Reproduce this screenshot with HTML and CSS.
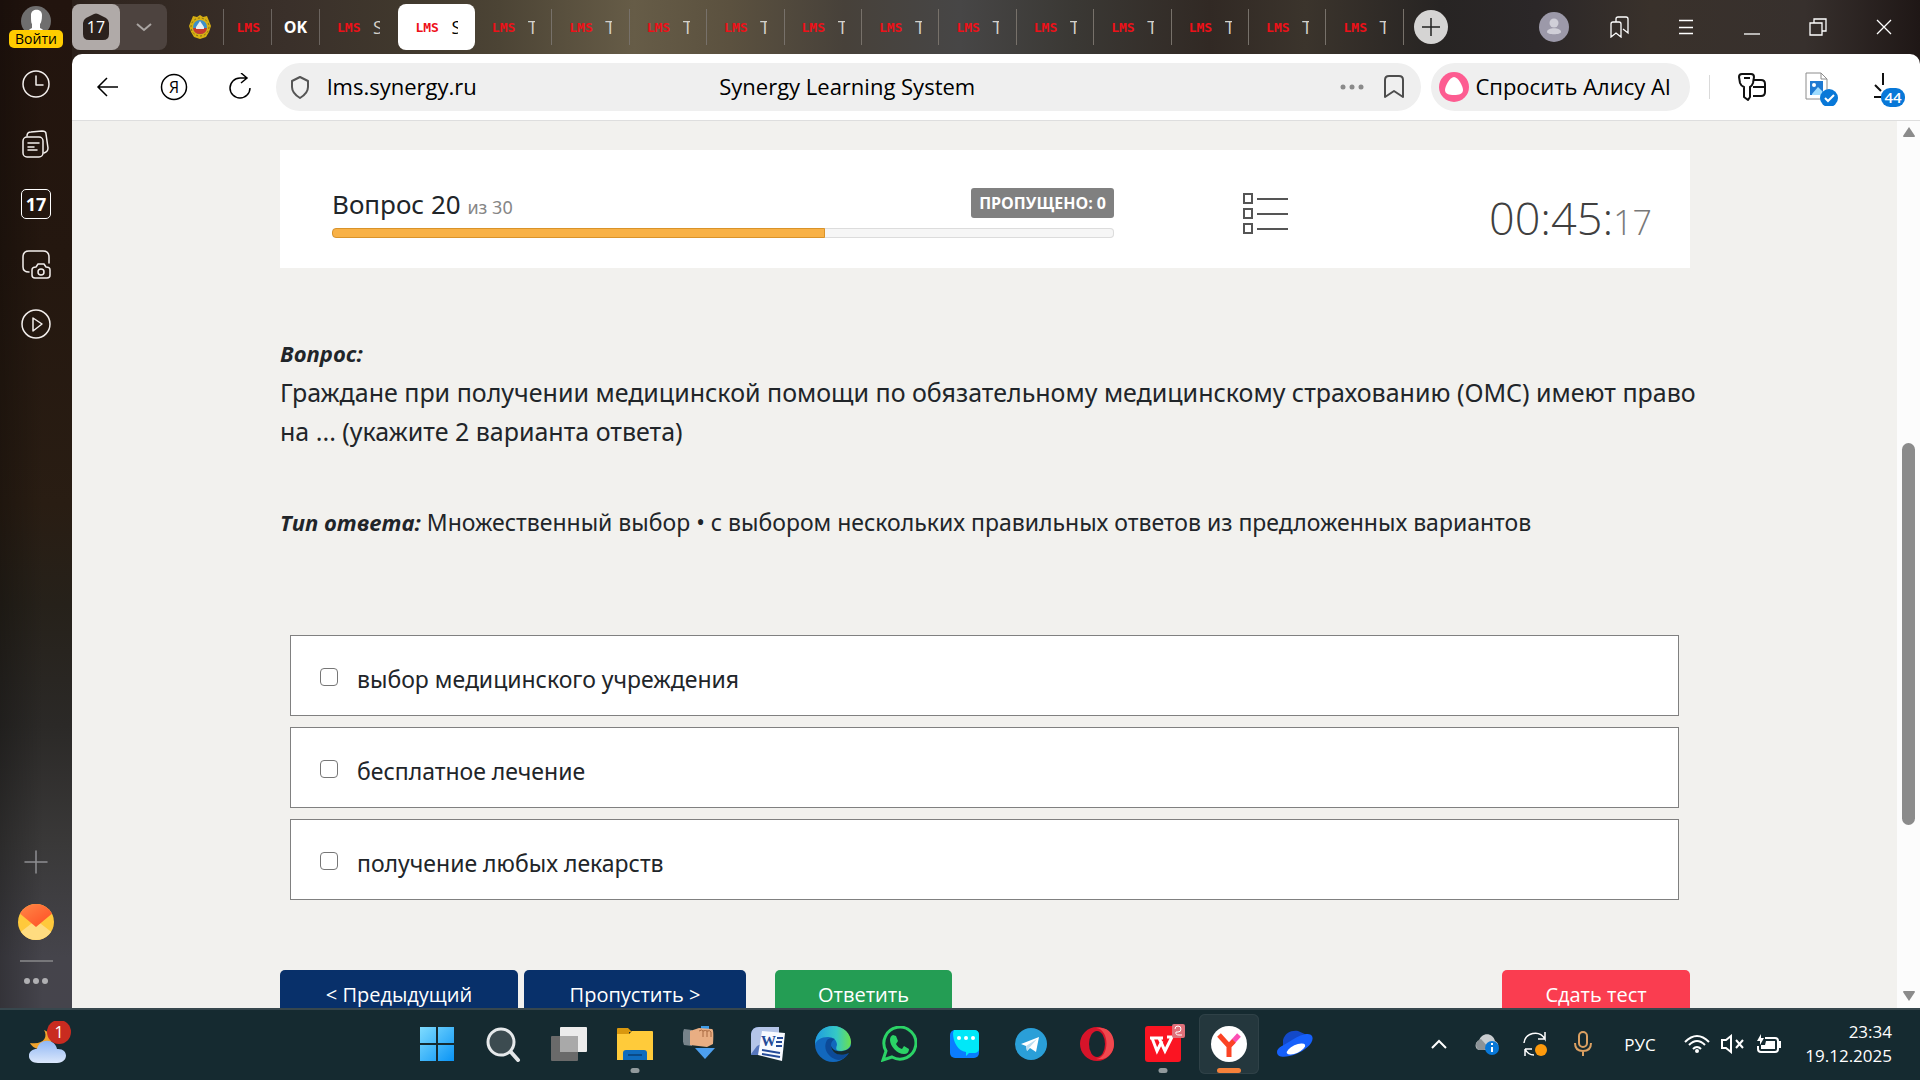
FILE: index.html
```html
<!DOCTYPE html>
<html lang="ru">
<head>
    <meta charset="UTF-8">
    <meta name="viewport" content="width=device-width, initial-scale=1.0">
    <title>Synergy Learning System</title>
    <link rel="stylesheet" href="styles.css">
</head>
<body>

    <div class="desktop">
        <aside class="sidebar">
            <button class="login">
                <svg class="login-face" width="30" height="30" viewBox="0 0 30 30"><circle cx="15" cy="15" r="15" fill="#6f6e6e"/><path d="M10 9c0-7 11-7 11 0 0 5-1 8-2 9v4c2 1 4 2 5 4H6c1-2 3-3 5-4v-4c-1-1-1-4-1-9z" fill="#fff"/></svg>
                <span class="login-label">Войти</span>
            </button>
            <nav class="side-nav">
                <button class="side-btn" aria-label="История"><svg width="32" height="32" viewBox="0 0 32 32"><circle cx="16" cy="16" r="13"/><path d="M16 8v9h7"/></svg></button>
                <button class="side-btn" aria-label="Коллекции"><svg width="32" height="32" viewBox="0 0 32 32"><rect x="3" y="9" width="20" height="20" rx="4"/><path d="M7 8c0-3 1-4 4-4l11-1c3 0 4 1 4 3l2 14c0 3-1 4-4 5M8 15h11M8 19h6M8 22h9"/></svg></button>
                <button class="side-btn" aria-label="Вкладки"><span class="side-count">17</span></button>
                <button class="side-btn" aria-label="Скриншот"><svg width="32" height="32" viewBox="0 0 32 32"><path d="M9 24c-4 0-6-1-6-5V9c0-4 2-6 6-6h14c4 0 6 2 6 6v6"/><path d="M12 22c0-2 1-3 4-3l2-3h6l2 3c3 0 4 1 4 3v5c0 2-1 3-3 3H15c-2 0-3-1-3-3z"/><circle cx="21" cy="24" r="3"/></svg></button>
                <button class="side-btn" aria-label="Видео"><svg width="32" height="32" viewBox="0 0 32 32"><circle cx="16" cy="16" r="14"/><path d="M13 10v13l9-7z"/></svg></button>
            </nav>
            <div class="side-bottom">
                <button class="side-btn" aria-label="Добавить"><svg class="dim" width="32" height="32" viewBox="0 0 32 32"><path d="M16 5v22M5 16h22"/></svg></button>
                <button class="side-btn" aria-label="Почта"><svg width="36" height="36" viewBox="0 0 36 36" stroke="none"><defs><clipPath id="mailClip"><circle cx="18" cy="18" r="18"/></clipPath><linearGradient id="mailRed" x1="0" y1="0" x2="1" y2="1"><stop offset="0" stop-color="#ff8a48"/><stop offset="1" stop-color="#ff4a22"/></linearGradient></defs><g clip-path="url(#mailClip)" stroke="none"><path d="M0 0h36v36H0z" fill="#ffc93c"/><path d="M0 30l18-14 18 14v6H0z" fill="#ffdc80"/><path d="M0 8l3-8h30l3 8-18 15z" fill="url(#mailRed)"/></g></svg></button>
                <hr class="side-line">
                <button class="side-more" aria-label="Ещё"><i></i><i></i><i></i></button>
            </div>
        </aside>

        <div class="browser">
            <header class="tab-strip">
                <div class="tab-group">
                    <button class="group-home" aria-label="17 вкладок"><svg width="28" height="28" viewBox="0 0 28 28"><path d="M12 1q2-1 4 0l8 4q3 2 3 5v11q0 6-6 6H7q-6 0-6-6V10q0-3 3-5z" fill="#2b211d"/><text x="14" y="20" text-anchor="middle" class="group-num">17</text></svg></button>
                    <button class="group-more" aria-label="Список вкладок"><svg width="18" height="10" viewBox="0 0 18 10"><path d="M2 2l7 6 7-6" fill="none" stroke="#aaa5a2" stroke-width="2"/></svg></button>
                </div>
                <div class="pinned">
                    <button class="pin" aria-label="ГИБДД"><svg width="24" height="26" viewBox="0 0 24 26"><path d="M12 1l3 2 4-1 2 5 2 5-2 6-3 5-6 2-6-2-3-5-2-6 2-5 2-5 4 1z" fill="#d8b012"/><circle cx="12" cy="13" r="9" fill="none" stroke="#7d6b13" stroke-width="1" stroke-dasharray="2 2"/><circle cx="12" cy="13" r="7" fill="#3d8fc9"/><path d="M5 14h14q-1 6-7 6t-7-6z" fill="#c73a2c"/><path d="M8 13l4-6 4 6v2H8z" fill="#e8eef2"/></svg></button>
                    <button class="pin"><span class="lms">LMS</span></button>
                    <button class="pin"><b class="ok">OK</b></button>
                </div>
                <div class="tabs">
                    <button class="tab tab-plain"><span class="lms">LMS</span><span class="tab-title">S</span></button>
                    <button class="tab tab-active"><span class="lms">LMS</span><span class="tab-title">S</span></button>
                    <button class="tab"><span class="lms">LMS</span><span class="tab-title">Т</span></button>
                    <button class="tab"><span class="lms">LMS</span><span class="tab-title">Т</span></button>
                    <button class="tab"><span class="lms">LMS</span><span class="tab-title">Т</span></button>
                    <button class="tab"><span class="lms">LMS</span><span class="tab-title">Т</span></button>
                    <button class="tab"><span class="lms">LMS</span><span class="tab-title">Т</span></button>
                    <button class="tab"><span class="lms">LMS</span><span class="tab-title">Т</span></button>
                    <button class="tab"><span class="lms">LMS</span><span class="tab-title">Т</span></button>
                    <button class="tab"><span class="lms">LMS</span><span class="tab-title">Т</span></button>
                    <button class="tab"><span class="lms">LMS</span><span class="tab-title">Т</span></button>
                    <button class="tab"><span class="lms">LMS</span><span class="tab-title">Т</span></button>
                    <button class="tab"><span class="lms">LMS</span><span class="tab-title">Т</span></button>
                    <button class="tab"><span class="lms">LMS</span><span class="tab-title">Т</span></button>
                </div>
                <button class="new-tab" aria-label="Новая вкладка"><svg width="34" height="34" viewBox="0 0 34 34"><circle cx="17" cy="17" r="17" fill="#d5d4d3"/><path d="M17 8v18M8 17h18" stroke="#222" stroke-width="1.5"/></svg></button>
                <div class="window-controls">
                    <button aria-label="Профиль"><svg width="30" height="30" viewBox="0 0 30 30"><circle cx="15" cy="15" r="15" fill="#9c99a9"/><circle cx="15" cy="11" r="4.5" fill="#d0cfd8"/><path d="M8 20c0-5 14-5 14 0 0 3-14 3-14 0z" fill="#d0cfd8"/></svg></button>
                    <button aria-label="Закладки"><svg class="line" width="22" height="22" viewBox="0 0 22 22"><path d="M2 8q0-2 2-2h6q2 0 2 2v13l-5-4-5 4zM7 6V3q0-2 2-2h8q2 0 2 2v14l-5-4"/></svg></button>
                    <button aria-label="Меню"><svg class="line" width="16" height="16" viewBox="0 0 16 16"><path d="M1 1.500h14M1 8.500h14M1 14.500h14"/></svg></button>
                    <button aria-label="Свернуть"><svg class="line" width="16" height="16" viewBox="0 0 16 16"><path d="M0 15h16"/></svg></button>
                    <button aria-label="Развернуть"><svg class="line" width="18" height="18" viewBox="0 0 18 18"><path d="M1 5h12v12H1zM5 5V1h12v12h-4"/></svg></button>
                    <button aria-label="Закрыть"><svg class="line" width="16" height="16" viewBox="0 0 16 16"><path d="M1 1l14 14M15 1L1 15"/></svg></button>
                </div>
            </header>

            <div class="toolbar">
                <div class="nav-buttons">
                    <button aria-label="Назад"><svg width="24" height="24" viewBox="0 0 24 24"><path d="M22 12H2M11 3l-9 9 9 9"/></svg></button>
                    <button aria-label="Яндекс"><svg width="28" height="28" viewBox="0 0 28 28"><circle cx="14" cy="14" r="12.500"/><text x="14" y="20" text-anchor="middle" class="ya">Я</text></svg></button>
                    <button aria-label="Обновить"><svg width="26" height="28" viewBox="0 0 26 28"><path d="M23 15a10 10 0 1 1-10-10h7M14 0l6 5-6 5"/></svg></button>
                </div>
                <form class="address">
                    <label class="address-left">
                        <svg width="22" height="24" viewBox="0 0 22 24"><path d="M11 2l8 4v6c0 4-3 8-8 11-5-3-8-7-8-11V6z" fill="none" stroke="#555" stroke-width="2" stroke-linejoin="round"/></svg>
                        <input class="url" type="text" value="lms.synergy.ru" aria-label="Адрес">
                    </label>
                    <span class="page-title">Synergy Learning System</span>
                    <span class="address-right">
                        <svg width="24" height="6" viewBox="0 0 24 6" fill="#8a8a8a"><circle cx="3" cy="3" r="2.500"/><circle cx="12" cy="3" r="2.500"/><circle cx="21" cy="3" r="2.500"/></svg>
                        <svg width="22" height="24" viewBox="0 0 22 24"><path d="M2 5q0-4 4-4h10q4 0 4 4v17l-9-6-9 6z" fill="none" stroke="#4d4d4d" stroke-width="2" stroke-linejoin="round"/></svg>
                    </span>
                </form>
                <button class="alisa">
                    <svg width="30" height="30" viewBox="0 0 30 30"><circle cx="15" cy="15" r="15" fill="#fd5c91"/><path d="M15 5c4 0 9 9 9 13s-4 5-9 5-9-1-9-5 5-13 9-13z" fill="#fff"/></svg>
                    <span>Спросить Алису AI</span>
                </button>
                <div class="extensions">
                    <button aria-label="Пароли"><svg width="28" height="28" viewBox="0 0 28 28" fill="none" stroke="#111" stroke-width="2" stroke-linejoin="round"><path d="M15 7h8q4 0 4 4v8q0 4-4 4h-8M15 14h12"/><path d="M4 1h9q3 0 3 3l-1 6q-1 3-3 4v10l-2 3-4-3V14q-3-1-4-4L1 4q0-3 3-3z" fill="#fff"/><path d="M6 5h6"/></svg></button>
                    <button aria-label="Файл"><svg width="42" height="34" viewBox="-8 0 42 34"><path d="M1 1h15l6 6v20H1z" fill="#fff" stroke="#8c8c8c"/><path d="M16 1v6h6" fill="none" stroke="#8c8c8c"/><path d="M5 9h13v14H5z" fill="#1f7ad2"/><path d="M7 22l6-7 5 5v3H7z" fill="#9fdcff"/><circle cx="9" cy="13" r="2" fill="#fff"/><circle cx="24" cy="26" r="9" fill="#0878d8"/><path d="M20 26l3 3 6-6" fill="none" stroke="#fff" stroke-width="2"/></svg></button>
                    <button aria-label="Загрузки"><svg width="42" height="36" viewBox="-10 -2 42 36"><path d="M10 0v12M2 12l6 6M1 24h8" fill="none" stroke="#111" stroke-width="2"/><rect x="8" y="15" width="24" height="19" rx="9" fill="#0878d8"/><text x="20" y="30" text-anchor="middle" class="dl-num">44</text></svg></button>
                </div>
            </div>

            <div class="viewport">
                <main class="page">
                    <section class="status">
                        <div class="progress-block">
                            <div class="progress-head">
                                <div class="counter">Вопрос 20 <small>из 30</small></div>
                                <span class="skipped">ПРОПУЩЕНО: 0</span>
                            </div>
                            <div class="progress"><div class="progress-bar" style="width: 63%"></div></div>
                        </div>
                        <button class="list-btn" aria-label="Список вопросов"><svg width="48" height="44" viewBox="0 0 48 44" fill="none" stroke="#555" stroke-width="2"><path d="M2 2h8v9H2zM2 17h8v9H2zM2 32h8v9H2zM15 7h31M15 22h31M15 37h31"/></svg></button>
                        <div class="timer">00:45:<span class="timer-sec">17</span></div>
                    </section>

                    <section class="question">
                        <p><strong>Вопрос:</strong><br>Граждане при получении медицинской помощи по обязательному медицинскому страхованию (ОМС) имеют право на ... (укажите 2 варианта ответа)</p>
                        <p class="answer-type"><strong>Тип ответа:</strong> Множественный выбор • с выбором нескольких правильных ответов из предложенных вариантов</p>
                    </section>

                    <section class="answers">
                        <label class="answer"><input type="checkbox"><span>выбор медицинского учреждения</span></label>
                        <label class="answer"><input type="checkbox"><span>бесплатное лечение</span></label>
                        <label class="answer"><input type="checkbox"><span>получение любых лекарств</span></label>
                    </section>

                    <div class="actions">
                        <button class="btn btn-prev">&lt; Предыдущий</button>
                        <button class="btn btn-skip">Пропустить &gt;</button>
                        <button class="btn btn-answer">Ответить</button>
                        <button class="btn btn-finish">Сдать тест</button>
                    </div>
                </main>
                <div class="scrollbar">
                    <svg width="14" height="12" viewBox="0 0 14 12"><path d="M7 1l6 9q0 1-1 1H2q-1 0-1-1z" fill="#8b8b8b"/></svg>
                    <div class="scroll-track"><div class="scroll-thumb"></div></div>
                    <svg width="14" height="12" viewBox="0 0 14 12"><path d="M7 11l6-9q0-1-1-1H2q-1 0-1 1z" fill="#8b8b8b"/></svg>
                </div>
            </div>
        </div>
    </div>

    <footer class="taskbar">
        <button class="weather" aria-label="Погода">
            <svg width="42" height="46" viewBox="0 0 42 46"><defs><linearGradient id="cloud" x1="0" y1="0" x2="0" y2="1"><stop offset="0" stop-color="#8fb7f4"/><stop offset="1" stop-color="#dbe7fb"/></linearGradient></defs><path d="M15 9c4 7 0 15-14 13 4 8 17 9 21 1 2-6-1-12-7-14z" fill="#f0a32c"/><path d="M9 42c-12 0-12-14-1-14 2-11 18-11 20 0 12-1 12 14 0 14z" fill="url(#cloud)"/><circle cx="30" cy="11" r="12" fill="#c92b20"/><text x="30" y="17" text-anchor="middle" class="badge-num">1</text></svg>
        </button>
        <nav class="apps">
            <button class="app" aria-label="Пуск"><svg width="36" height="36" viewBox="0 0 36 36"><defs><linearGradient id="win" x1="0" y1="0" x2="1" y2="1"><stop offset="0" stop-color="#7fdcff"/><stop offset="1" stop-color="#0a94f5"/></linearGradient></defs><path d="M1 1h16v16H1zM19 1h16v16H19zM1 19h16v16H1zM19 19h16v16H19z" fill="url(#win)"/></svg></button>
            <button class="app" aria-label="Поиск"><svg width="36" height="36" viewBox="0 0 36 36"><path d="M25 25l8 9" stroke="#e3e6e8" stroke-width="4" stroke-linecap="round"/><circle cx="16" cy="16" r="13" fill="#3c4b50" stroke="#e6e9eb" stroke-width="3"/></svg></button>
            <button class="app" aria-label="Представление задач"><svg width="36" height="36" viewBox="0 0 36 36"><rect x="9" y="1" width="27" height="25" rx="1" fill="#ececec"/><rect x="0" y="10" width="27" height="25" rx="1" fill="#6a6a6a"/><path d="M9 10h18v16H9z" fill="#a9a9a9"/></svg></button>
            <button class="app app-open" aria-label="Проводник"><svg width="36" height="36" viewBox="0 0 36 36"><path d="M0 3q0-1 1-1h10l4 4h-3v5H0z" fill="#d9980f"/><path d="M0 8h12l3-3h20q1 0 1 1v28H0z" fill="#ffcb3a"/><path d="M6 34v-7q0-3 3-3h18q3 0 3 3v7z" fill="#0f6cbd"/><path d="M11 29h14" stroke="#0a4a86" stroke-width="2"/></svg></button>
            <button class="app" aria-label="Загрузчик"><svg width="36" height="36" viewBox="0 0 36 36"><path d="M1 3l8 1v16l-8-1q-3-8 0-16z" fill="#77838a"/><path d="M18 0h8v6h-8z" fill="#3e9be6"/><path d="M7 5l9-3 13 1q2 0 1 15l-6 3-17-2z" fill="#e9ae83"/><path d="M16 5q3-2 4 0v6M20 5q3-1 4 0v6M24 5q3-1 4 1v5" fill="none" stroke="#a86840"/><path d="M12 22h20L22 33z" fill="#4d9fee"/></svg></button>
            <button class="app" aria-label="Word"><svg width="36" height="36" viewBox="0 0 36 36"><path d="M2 8q1-7 8-7h20v28H2z" fill="#5777bd"/><path d="M2 8q1-7 8-7h20v8L8 20l-6 8z" fill="#b4c5e8"/><path d="M13 5l23 2-3 28-24-6z" fill="#f8faff"/><path d="M28 12h6M27 16h6M27 20h6M13 24l18 3M13 28l18 3" stroke="#244a98" stroke-width="2"/><text x="12" y="20" class="word-w">W</text></svg></button>
            <button class="app" aria-label="Edge"><svg width="36" height="36" viewBox="0 0 36 36"><defs><linearGradient id="edgeTop" x1="0" y1="0" x2="1" y2="0"><stop offset="0" stop-color="#1f9be0"/><stop offset=".6" stop-color="#35c9c6"/><stop offset="1" stop-color="#6be04d"/></linearGradient></defs><circle cx="18" cy="18" r="18" fill="#1268bd"/><path d="M0 19C0 7 8 0 18 0c11 0 18 8 18 16 0 6-5 9-10 9-6 0-5-3-4-6 0-5-4-8-9-8C6 11 1 14 0 19z" fill="url(#edgeTop)"/><path d="M12 14c-5 9 2 19 12 20 5-1 8-4 10-7-10 4-18 1-18-8 0-3 2-5 4-6-3-1-6-1-8 1z" fill="#0c4a98"/><path d="M36 20v6l-2 1c-9 4-17 1-18-7 2 5 8 6 12 5q6-1 8-5z" fill="#152a30"/></svg></button>
            <button class="app" aria-label="WhatsApp"><svg width="36" height="36" viewBox="0 0 36 36"><path d="M2 34l3-9a16 16 0 1 1 6 6z" fill="none" stroke="#2bd366" stroke-width="3"/><path d="M12 9l3 1 2 5-2 3q2 4 6 5l2-3 5 3q0 5-5 5C16 28 9 20 9 14q0-4 3-5z" fill="#2bd366"/></svg></button>
            <button class="app" aria-label="Мессенджер"><svg width="32" height="32" viewBox="0 0 32 32"><rect x="1" y="2" width="29" height="28" rx="5" fill="#0a7cff"/><path d="M5 2h20q5 0 5 5v14q0 3-4 4h-6l-3 3v-4C9 23 4 14 4 5z" fill="#00e8f8"/><circle cx="10" cy="10" r="2" fill="#fff"/><circle cx="17" cy="10" r="2" fill="#fff"/><circle cx="24" cy="10" r="2" fill="#fff"/></svg></button>
            <button class="app" aria-label="Telegram"><svg width="32" height="32" viewBox="0 0 32 32"><circle cx="16" cy="16" r="16" fill="#2a9fd8"/><path d="M6 16l18-7-3 15-6-4-3 3-1-5z" fill="#fff"/><path d="M11 18l11-7-8 9-2 3z" fill="#b9dcf0"/></svg></button>
            <button class="app" aria-label="Opera"><svg width="36" height="36" viewBox="0 0 36 36"><circle cx="18" cy="18" r="17" fill="#d6142a"/><path d="M17 2c14-2 18 8 18 16s-6 17-18 15c14-1 14-30 0-31z" fill="#f0484e"/><ellipse cx="18" cy="18" rx="8" ry="13" fill="#152a30"/></svg></button>
            <button class="app app-open" aria-label="WPS Office"><svg width="44" height="40" viewBox="-2 0 44 40"><rect x="2" y="2" width="36" height="36" rx="3" fill="#fb1422"/><path d="M7 14h13M9 14l5 13 5-10M16 14l6 13 7-14h-5" fill="none" stroke="#fff" stroke-width="3"/><rect x="29" y="0" width="13" height="14" rx="2" fill="#e0707a"/><path d="M32 5q0-3 3-3t3 3-3 3h-2q-1 3 3 3h3" fill="none" stroke="#fff"/></svg></button>
            <button class="app app-current" aria-label="Яндекс Браузер"><svg width="36" height="36" viewBox="0 0 36 36"><circle cx="18" cy="18" r="18" fill="#fff"/><path d="M28 9L18 20" stroke="#fc4fb4" stroke-width="5"/><path d="M23 15l-5 5v11M8 9l10 11" fill="none" stroke="#fb4324" stroke-width="5"/></svg></button>
            <button class="app" aria-label="Яндекс Диск"><svg width="38" height="36" viewBox="0 0 38 36"><path d="M7 14c2-7 8-10 15-9l9 4-4 14-20 2z" fill="#1349c8"/><path d="M1 26c0-5 8-7 15-12 9-6 18-8 20-4 3 6-6 14-16 18C10 32 1 32 1 26z" fill="#1660fb"/><ellipse cx="20" cy="23" rx="10" ry="4" transform="rotate(-25 20 23)" fill="#fff"/></svg></button>
        </nav>
        <div class="tray">
            <button class="tray-icon" aria-label="Скрытые значки"><svg width="18" height="12" viewBox="0 0 18 12"><path d="M2 10l7-7 7 7" fill="none" stroke="#fff" stroke-width="2"/></svg></button>
            <button class="tray-icon" aria-label="OneDrive"><svg width="26" height="24" viewBox="0 0 26 24"><path d="M5 18C0 17 1 9 5 9c2-9 14-9 16 0 5 2 4 9-1 9z" fill="#c9cdd0"/><path d="M2 12q1-4 5-5l8 9-5 2H5q-3-1-3-6z" fill="#8c9397"/><circle cx="18" cy="16" r="7" fill="#0878d8"/><path d="M18 15v5M18 11v2" stroke="#fff" stroke-width="2"/></svg></button>
            <button class="tray-icon" aria-label="Обновление"><svg width="26" height="26" viewBox="0 0 26 26"><path d="M2 12C3 2 17-2 23 8V1M23 8h-7M12 24c-4 0-7-2-9-6v7M3 18h7" fill="none" stroke="#fff" stroke-width="1.500"/><circle cx="19" cy="19" r="6" fill="#fd9a0c"/></svg></button>
            <button class="tray-icon" aria-label="Микрофон"><svg width="18" height="26" viewBox="0 0 18 26" fill="none" stroke="#dba062" stroke-width="2"><rect x="5" y="1" width="8" height="15" rx="4"/><path d="M1 12q0 8 8 8t8-8M9 20v5"/></svg></button>
            <button class="tray-lang">РУС</button>
            <button class="tray-status" aria-label="Сеть, звук, батарея">
                <svg width="26" height="20" viewBox="0 0 26 20" fill="none" stroke="#fff" stroke-width="2"><path d="M1 8q12-12 24 0M5 11q8-8 16 0M9 15q4-4 8 0"/><circle cx="13" cy="17" r="1" fill="#fff"/></svg>
                <svg width="26" height="20" viewBox="0 0 26 20" fill="none" stroke="#fff" stroke-width="2"><path d="M2 6h4l5-4v16l-5-4H2zM16 6l7 8M23 6l-7 8"/></svg>
                <svg width="26" height="20" viewBox="0 0 26 20" fill="none" stroke="#fff" stroke-width="2"><path d="M9 4h10q3 0 3 3v8q0 3-3 3H5q-3 0-3-3v-3"/><path d="M23 8h1v5h-1"/><path d="M10 7h9v8H5v-4h4z" fill="#fff" stroke="none"/><path d="M5 0L1 7h3v4l4-7H5z" fill="#fff" stroke="none"/></svg>
            </button>
            <button class="clock"><span>23:34</span><span>19.12.2025</span></button>
        </div>
    </footer>

</body>
</html>
```

FILE: styles.css
```css
* {
    box-sizing: border-box;
}

body {
    margin: 0;
    height: 100vh;
    display: flex;
    flex-direction: column;
    overflow: hidden;
    font-family: "Open Sans", "Noto Sans", sans-serif;
    color: #212529;
}

button {
    display: flex;
    align-items: center;
    justify-content: center;
    padding: 0;
    border: none;
    background: none;
    color: inherit;
    font: inherit;
    cursor: pointer;
}

svg {
    display: block;
    flex: none;
}

.desktop {
    flex: 1;
    min-height: 0;
    display: flex;
    background: linear-gradient(90deg, #1c0f0a 0%, #30251f 5%, #3a302a 15%, #40382d 21%, #4c4435 26%, #665c47 33%, #5b513f 38%, #47413a 44%, #474646 50%, #3a3834 56%, #312924 63%, #3b342c 68%, #272423 75%, #2b2728 80%, #39312b 86%, #37302d 94%, #1f1716 100%);
}

/* Sidebar */

.sidebar {
    width: 72px;
    flex: none;
    display: flex;
    flex-direction: column;
    align-items: center;
    padding: 6px 0 24px;
    background:
        linear-gradient(90deg, rgba(0, 0, 0, 0.25), rgba(0, 0, 0, 0) 60%),
        linear-gradient(180deg, #22140e 0%, #24170f 25%, #291d13 50%, #26211a 60%, #2b2927 72%, #3a3939 84%, #45444b 95%, #45444c 100%);
}

.login {
    flex-direction: column;
    width: 54px;
    height: 42px;
    justify-content: flex-start;
}

.login-label {
    margin-top: -6px;
    width: 54px;
    height: 18px;
    border-radius: 5px;
    background: #ffcc00;
    color: #000;
    font-size: 14px;
    line-height: 18px;
    position: relative;
}

.side-nav {
    display: flex;
    flex-direction: column;
    gap: 24px;
    margin-top: 18px;
}

.side-btn {
    width: 36px;
    height: 36px;
}

.side-btn svg {
    fill: none;
    stroke: #f3efed;
    stroke-width: 1.5;
    stroke-linecap: round;
    stroke-linejoin: round;
}

.side-btn .dim {
    stroke: #8f8f92;
}

.side-count {
    width: 30px;
    height: 30px;
    border: 1px solid #fff;
    border-radius: 5px;
    color: #fff;
    font-size: 18px;
    font-weight: 700;
    line-height: 28px;
}

.side-bottom {
    margin-top: auto;
    display: flex;
    flex-direction: column;
    align-items: center;
    gap: 24px;
}

.side-line {
    width: 33px;
    height: 2px;
    margin: -4px 0 -8px;
    border: none;
    background: #77777a;
}

.side-more {
    gap: 3px;
}

.side-more i {
    width: 6px;
    height: 6px;
    border-radius: 50%;
    background: #b0b0b3;
}

/* Tabs */

.browser {
    flex: 1;
    min-width: 0;
    display: flex;
    flex-direction: column;
}

.tab-strip {
    height: 54px;
    flex: none;
    display: flex;
    align-items: center;
    padding: 0 3px 0 0;
}

.tab-group {
    display: flex;
    height: 46px;
    border-radius: 8px;
    background: #4d433f;
}

.group-home {
    width: 48px;
    border-radius: 8px;
    background: #b0aaa8;
}

.group-more {
    width: 47px;
}

.group-num {
    font-size: 16px;
    fill: #fff;
}

.pinned {
    display: flex;
    margin-left: 9px;
}

.pin {
    width: 48px;
    height: 36px;
    border-right: 1px solid #6b645f;
}

.lms {
    width: 22px;
    flex: none;
    color: #ee1018;
    font-family: "DejaVu Sans Mono", monospace;
    font-size: 13px;
    font-weight: 700;
}

.ok {
    color: #fff;
    font-size: 16px;
}

.tabs {
    display: flex;
    flex: 0 1 1084px;
    min-width: 0;
}

.tab {
    flex: 1 1 0;
    min-width: 0;
    height: 36px;
    justify-content: flex-start;
    gap: 14px;
    padding-left: 17px;
    border-right: 1px solid #77716a;
    color: #d5d1cb;
}

.tab-title {
    width: 7px;
    overflow: hidden;
    white-space: nowrap;
    font-size: 18px;
    line-height: 24px;
    text-align: left;
}

.tab-plain {
    border-right: none;
}

.tab-active {
    height: 46px;
    margin: -5px 0 -5px 2px;
    border-right: none;
    border-radius: 8px;
    background: #fff;
    color: #000;
}

.new-tab {
    margin-left: 10px;
}

.window-controls {
    display: flex;
    margin-left: auto;
}

.window-controls button {
    width: 66px;
    height: 54px;
}

.line {
    fill: none;
    stroke: #fff;
    stroke-width: 1.3;
}

/* Toolbar */

.toolbar {
    height: 67px;
    flex: none;
    display: flex;
    align-items: center;
    padding-right: 3px;
    border-bottom: 1px solid #dedede;
    border-radius: 10px 10px 0 0;
    background: #fff;
    color: #000;
    font-size: 22px;
}

.nav-buttons {
    display: flex;
    padding: 0 3px;
}

.nav-buttons button {
    width: 66px;
    height: 48px;
}

.nav-buttons svg {
    fill: none;
    stroke: #000;
    stroke-width: 1.5;
}

.nav-buttons .ya {
    fill: #000;
    stroke: none;
    font-size: 16px;
}

.address {
    flex: 1;
    min-width: 0;
    display: grid;
    grid-template-columns: 1fr auto 1fr;
    align-items: center;
    height: 48px;
    padding: 0 16px 0 13px;
    border-radius: 24px;
    background: #efefef;
}

.address-left {
    display: flex;
    align-items: center;
    gap: 16px;
}

.url {
    width: 200px;
    padding: 0 0 2px;
    border: none;
    outline: none;
    background: none;
    color: #000;
    font: inherit;
}

.page-title {
    padding-bottom: 2px;
}

.address-right {
    display: flex;
    align-items: center;
    justify-content: flex-end;
    gap: 19px;
}

.alisa {
    height: 48px;
    margin-left: 10px;
    padding: 0 19px 0 8px;
    gap: 6px;
    border-radius: 24px;
    background: #efefef;
    white-space: nowrap;
}

.alisa span {
    padding-bottom: 2px;
}

.extensions {
    display: flex;
    margin-left: 19px;
    padding-left: 10px;
    background: linear-gradient(#dadada, #dadada) left center / 1px 24px no-repeat;
}

.extensions button {
    width: 66px;
    height: 48px;
    padding-top: 4px;
}

.extensions button:first-child {
    padding-top: 0;
}

.dl-num {
    font-size: 15px;
    font-weight: 600;
    fill: #fff;
}

/* Test page */

.viewport {
    flex: 1;
    min-height: 0;
    display: flex;
    background: #f2f1ee;
}

.page {
    flex: 1;
    min-width: 0;
    padding: 29px 207px 0 208px;
    overflow: hidden;
    font-family: "Noto Sans", "Open Sans", sans-serif;
}

.status {
    display: flex;
    height: 118px;
    padding: 0 38px 0 52px;
    background: #fff;
}

.progress-block {
    flex: 0 1 782px;
    padding-top: 38px;
}

.progress-head {
    display: flex;
    align-items: center;
    justify-content: space-between;
    height: 30px;
}

.counter {
    padding-top: 4px;
    font-size: 26px;
    line-height: 30px;
}

.counter small {
    color: #868686;
    font-size: 18px;
}

.skipped {
    padding: 0 8px;
    border-radius: 3px;
    background: #808080;
    color: #fff;
    font-family: "Open Sans", sans-serif;
    font-size: 16px;
    font-weight: 700;
    line-height: 30px;
}

.progress {
    height: 10px;
    margin-top: 10px;
    border-radius: 4px;
    background: #f6f6f6;
    box-shadow: inset 0 0 0 1px #dcdcdc;
    overflow: hidden;
}

.progress-bar {
    height: 100%;
    border: 1px solid #d9932a;
    border-radius: 4px 0 0 4px;
    background: #f8b146;
}

.list-btn {
    margin: 42px 0 0 128px;
    align-self: flex-start;
}

.timer {
    margin: 41px 0 0 auto;
    color: #404040;
    font-family: "Open Sans", sans-serif;
    font-size: 45px;
    font-weight: 300;
    line-height: 54px;
}

.timer-sec {
    color: #787878;
    font-size: 34px;
}

.question {
    margin-right: -12px;
    padding-top: 65px;
    font-size: 25px;
    line-height: 39px;
}

.question p {
    margin: 0;
}

.question strong {
    font-family: "Open Sans", sans-serif;
    font-size: 22px;
    font-style: italic;
}

.question .answer-type {
    margin-top: 52px;
    font-size: 23px;
}

.answers {
    display: flex;
    flex-direction: column;
    gap: 11px;
    margin: 93px 11px 0 10px;
}

.answer {
    display: flex;
    align-items: center;
    gap: 19px;
    height: 81px;
    padding: 7px 29px 0;
    border: 1px solid #808080;
    background: #fff;
    font-size: 23px;
    line-height: 30px;
}

.answer input {
    width: 18px;
    height: 18px;
    margin: 0 0 4px;
    appearance: none;
    border: 1px solid #767676;
    border-radius: 4px;
    background: #fff;
}

.actions {
    display: flex;
    margin-top: 70px;
}

.btn {
    height: 48px;
    border-radius: 5px;
    color: #fff;
    font-family: "Open Sans", sans-serif;
    font-size: 20px;
}

.btn-prev {
    width: 238px;
    background: #08306a;
}

.btn-skip {
    width: 222px;
    margin-left: 6px;
    background: #08306a;
}

.btn-answer {
    width: 177px;
    margin-left: 29px;
    background: #249d54;
}

.btn-finish {
    width: 188px;
    margin-left: auto;
    background: #fa3d50;
}

.scrollbar {
    width: 23px;
    flex: none;
    display: flex;
    flex-direction: column;
    align-items: center;
    padding: 5px 0 6px;
    background: #fcfcfc;
}

.scroll-track {
    flex: 1;
    width: 13px;
    display: flex;
    flex-direction: column;
    padding: 305px 0 165px;
}

.scroll-thumb {
    flex: 1;
    border-radius: 7px;
    background: #8b8b8b;
}

/* Taskbar */

.taskbar {
    height: 72px;
    flex: none;
    display: grid;
    grid-template-columns: 2fr auto 3fr;
    align-items: center;
    padding-bottom: 2px;
    border-top: 2px solid #37474d;
    background: #152a30;
    color: #fff;
}

.weather {
    justify-self: start;
    margin-left: 29px;
}

.badge-num {
    font-size: 16px;
    fill: #fff;
}

.apps {
    display: flex;
    gap: 6px;
    padding-left: 11px;
}

.app {
    position: relative;
    width: 60px;
    height: 60px;
    border-radius: 6px;
}

.app-current {
    background: #24373d;
    box-shadow: inset 0 0 0 1px #2f4147;
}

.app-open::after,
.app-current::after {
    content: "";
    position: absolute;
    bottom: 1px;
    left: 50%;
    width: 9px;
    height: 5px;
    border-radius: 3px;
    background: #919a9d;
    transform: translateX(-50%);
}

.app-current::after {
    width: 24px;
    background: #f5813a;
}

.word-w {
    font-family: "Liberation Serif", serif;
    font-size: 15px;
    font-weight: 700;
    fill: #244a98;
}

.tray {
    justify-self: end;
    display: flex;
    align-items: center;
    padding-right: 28px;
    font-size: 17px;
}

.tray-icon {
    width: 48px;
    height: 60px;
}

.tray-lang {
    width: 66px;
    height: 60px;
}

.tray-status {
    gap: 10px;
    width: 120px;
    height: 60px;
}

.clock {
    flex-direction: column;
    align-items: flex-end;
    width: 99px;
    line-height: 24px;
}
```
